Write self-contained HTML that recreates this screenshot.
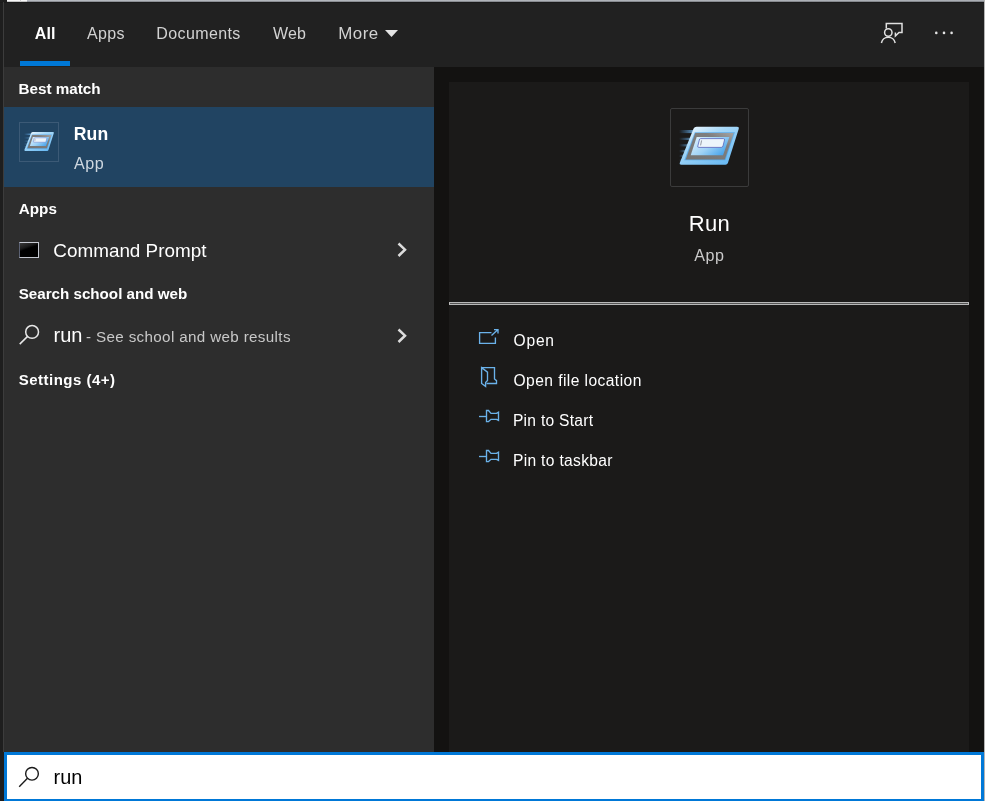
<!DOCTYPE html>
<html><head><meta charset="utf-8"><title>Search</title>
<style>
html,body{margin:0;padding:0}
body{width:985px;height:801px;position:relative;overflow:hidden;background:#1e1e1e;font-family:"Liberation Sans",sans-serif}
div,span,svg{position:absolute;display:block}
.t{white-space:nowrap;line-height:1;font-weight:400}
#tx{left:0;top:0;width:985px;height:801px;will-change:transform}
.b{font-weight:700}
</style></head><body>
<!-- window chrome -->
<div style="left:0;top:0;width:985px;height:1px;background:linear-gradient(90deg,#b6bac0,#aaaeb4)"></div>
<div style="left:0;top:1px;width:985px;height:1px;background:linear-gradient(90deg,#8e9197,#85888d)"></div>
<div style="left:0;top:0;width:7px;height:3px;background:#1e1e1e"></div>
<div style="left:7px;top:0;width:20px;height:1px;background:#f8f8f8"></div>
<div style="left:7px;top:1px;width:20px;height:1px;background:#c4c4c4"></div>
<div style="left:20px;top:0;width:1px;height:2px;background:#ccc"></div>
<div style="left:0;top:2px;width:985px;height:1px;background:#1a1a1a"></div>
<div style="left:3px;top:2px;width:1px;height:750px;background:#3c3c3c"></div>
<div style="left:984px;top:0;width:1px;height:801px;background:#b4b4b4"></div>
<!-- header -->
<div style="left:4px;top:3px;width:980px;height:64px;background:#212121"></div>
<div style="left:20px;top:61px;width:50px;height:5px;background:#0078d7"></div>
<svg style="left:384px;top:29px" width="16" height="10" viewBox="0 0 16 10"><path d="M1 1 H14 L7.5 8 Z" fill="#e4e4e4"/></svg>
<svg style="left:878px;top:20px" width="28" height="26" viewBox="0 0 28 26" fill="none" stroke="#e0e0e0" stroke-width="1.5">
<path d="M8.3 8.6 V3.4 H24 V12.4 H21 L17.4 16 V12.4"/>
<circle cx="10.3" cy="12.5" r="3.7"/>
<path d="M3.4 23 A7 7 0 0 1 17.2 23"/>
</svg>
<svg style="left:930px;top:28px" width="28" height="10" viewBox="0 0 28 10"><circle cx="6.3" cy="4.9" r="1.3" fill="#e4e4e4"/><circle cx="14" cy="4.9" r="1.3" fill="#e4e4e4"/><circle cx="21.6" cy="4.9" r="1.3" fill="#e4e4e4"/></svg>
<!-- left pane -->
<div style="left:4px;top:67px;width:430px;height:685px;background:#2d2d2d"></div>
<div style="left:4px;top:107px;width:430px;height:80px;background:#214462"></div>
<div style="left:19px;top:122px;width:38px;height:38px;border:1px solid #3c5a76"></div>

<svg style="left:23px;top:130.1px" width="32" height="24" viewBox="0 0 64 48">
<defs>
<linearGradient id="g1a" x1="0.1" y1="0" x2="0.9" y2="1"><stop offset="0" stop-color="#f4faff"/><stop offset="0.35" stop-color="#a6d8f8"/><stop offset="1" stop-color="#62b6f2"/></linearGradient>
<linearGradient id="g2a" x1="0" y1="0.2" x2="1" y2="0.8"><stop offset="0" stop-color="#dcf0fd"/><stop offset="0.5" stop-color="#9ed2f6"/><stop offset="1" stop-color="#3f9fea"/></linearGradient>
<linearGradient id="g3a" x1="0" y1="0" x2="1" y2="0"><stop offset="0" stop-color="#4a8fd0" stop-opacity="0"/><stop offset="1" stop-color="#6fb4ea" stop-opacity="0.85"/></linearGradient>
<linearGradient id="g4a" x1="0" y1="1" x2="1" y2="0"><stop offset="0" stop-color="#747474"/><stop offset="0.7" stop-color="#7e7e7e"/><stop offset="1" stop-color="#a4a4a4"/></linearGradient>
</defs>
<rect x="2" y="7" width="15" height="3.1" fill="url(#g3a)"/>
<rect x="2" y="14.8" width="12" height="2.2" fill="url(#g3a)" opacity="0.8"/>
<rect x="2" y="21.2" width="9.5" height="2.2" fill="url(#g3a)" opacity="0.75"/>
<rect x="2" y="26.9" width="7.5" height="2.4" fill="url(#g3a)" opacity="0.7"/>
<rect x="2" y="31.8" width="5.5" height="2.2" fill="url(#g3a)" opacity="0.6"/>
<rect x="2" y="36.4" width="4" height="2" fill="url(#g3a)" opacity="0.5"/>
<path d="M19.6 3.75 L60 3.75 Q62.4 3.75 61.7 6 L50.9 40 Q50.3 41.8 48.4 41.8 L4.4 41.8 Q2 41.8 2.9 39.6 L16.6 5.6 Q17.4 3.75 19.6 3.75 Z" fill="url(#g1a)"/>
<path d="M17.8 9.2 L57.9 9.2 L48.4 37.3 L7.3 37.3 Z" fill="#4e9fe2" opacity="0.75"/>
<path d="M18.3 10.1 L56.7 10.1 L47.8 36.4 L8.7 36.4 Z" fill="url(#g4a)"/>
<path d="M19.7 14.1 L52.4 14.1 L46 32.2 L13.7 32.2 Z" fill="url(#g2a)"/>
<path d="M23.6 15.6 L46.4 15.6 Q47.9 15.6 47.5 17 L46 23 Q45.6 24.4 44.2 24.4 L21.8 24.4 Q20.3 24.4 20.8 23 L22.3 17 Q22.6 15.6 23.6 15.6 Z" fill="#ecf5fb" stroke="#5762ba" stroke-width="0.8"/>
<path d="M24.6 17.4 L23.6 22.4" stroke="#8a8f98" stroke-width="0.9" fill="none"/>
</svg>
<!-- cmd icon -->
<div style="left:19px;top:242px;width:18px;height:14px;border:1px solid #c4c8d0;border-left-color:#5a6072;background:linear-gradient(160deg,#3a3a3a 0%,#1a1a1a 30%,#000 42%)"></div>
<svg style="left:394px;top:240px" width="16" height="20" viewBox="0 0 16 20" fill="none" stroke="#dcdcdc" stroke-width="2.5"><path d="M4.5 3.5 L11 9.7 L4.5 16"/></svg>
<svg style="left:394px;top:326px" width="16" height="20" viewBox="0 0 16 20" fill="none" stroke="#dcdcdc" stroke-width="2.5"><path d="M4.5 3.5 L11 9.7 L4.5 16"/></svg>
<svg style="left:16px;top:322px" width="26" height="26" viewBox="0 0 26 26" fill="none" stroke="#e8e8e8" stroke-width="1.5"><circle cx="16.1" cy="9.9" r="6.4"/><path d="M11.6 14.4 L3.7 22.1"/></svg>
<!-- right pane -->
<div style="left:434px;top:67px;width:550px;height:685px;background:#131211"></div>
<div style="left:449px;top:82px;width:520px;height:670px;background:#1b1a19"></div>
<div style="left:669.5px;top:107.5px;width:77px;height:77px;border:1px solid #3b3b3b;border-radius:2px;box-sizing:content-box"></div>

<svg style="left:677px;top:123px" width="64" height="48" viewBox="0 0 64 48">
<defs>
<linearGradient id="g1b" x1="0.1" y1="0" x2="0.9" y2="1"><stop offset="0" stop-color="#f4faff"/><stop offset="0.35" stop-color="#a6d8f8"/><stop offset="1" stop-color="#62b6f2"/></linearGradient>
<linearGradient id="g2b" x1="0" y1="0.2" x2="1" y2="0.8"><stop offset="0" stop-color="#dcf0fd"/><stop offset="0.5" stop-color="#9ed2f6"/><stop offset="1" stop-color="#3f9fea"/></linearGradient>
<linearGradient id="g3b" x1="0" y1="0" x2="1" y2="0"><stop offset="0" stop-color="#4a8fd0" stop-opacity="0"/><stop offset="1" stop-color="#6fb4ea" stop-opacity="0.85"/></linearGradient>
<linearGradient id="g4b" x1="0" y1="1" x2="1" y2="0"><stop offset="0" stop-color="#747474"/><stop offset="0.7" stop-color="#7e7e7e"/><stop offset="1" stop-color="#a4a4a4"/></linearGradient>
</defs>
<rect x="2" y="7" width="15" height="3.1" fill="url(#g3b)"/>
<rect x="2" y="14.8" width="12" height="2.2" fill="url(#g3b)" opacity="0.8"/>
<rect x="2" y="21.2" width="9.5" height="2.2" fill="url(#g3b)" opacity="0.75"/>
<rect x="2" y="26.9" width="7.5" height="2.4" fill="url(#g3b)" opacity="0.7"/>
<rect x="2" y="31.8" width="5.5" height="2.2" fill="url(#g3b)" opacity="0.6"/>
<rect x="2" y="36.4" width="4" height="2" fill="url(#g3b)" opacity="0.5"/>
<path d="M19.6 3.75 L60 3.75 Q62.4 3.75 61.7 6 L50.9 40 Q50.3 41.8 48.4 41.8 L4.4 41.8 Q2 41.8 2.9 39.6 L16.6 5.6 Q17.4 3.75 19.6 3.75 Z" fill="url(#g1b)"/>
<path d="M17.8 9.2 L57.9 9.2 L48.4 37.3 L7.3 37.3 Z" fill="#4e9fe2" opacity="0.75"/>
<path d="M18.3 10.1 L56.7 10.1 L47.8 36.4 L8.7 36.4 Z" fill="url(#g4b)"/>
<path d="M19.7 14.1 L52.4 14.1 L46 32.2 L13.7 32.2 Z" fill="url(#g2b)"/>
<path d="M23.6 15.6 L46.4 15.6 Q47.9 15.6 47.5 17 L46 23 Q45.6 24.4 44.2 24.4 L21.8 24.4 Q20.3 24.4 20.8 23 L22.3 17 Q22.6 15.6 23.6 15.6 Z" fill="#ecf5fb" stroke="#5762ba" stroke-width="0.8"/>
<path d="M24.6 17.4 L23.6 22.4" stroke="#8a8f98" stroke-width="0.9" fill="none"/>
</svg>
<div style="left:449px;top:302px;width:520px;height:3px;background:#555;box-sizing:border-box;border:1px solid #b8b8b8"></div>
<!-- action icons -->
<svg style="left:475px;top:325px" width="28" height="24" viewBox="0 0 28 24" fill="none" stroke="#6bb2ea" stroke-width="1.35"><path d="M16.5 7.6 H4.6 V18.4 H20.4 V12.5"/><path d="M16.5 10.6 L23 4.6 M19 4.6 H23 V8.6"/></svg>
<svg style="left:475px;top:362px" width="28" height="28" viewBox="0 0 28 28" fill="none" stroke="#6bb2ea" stroke-width="1.35"><path d="M6.6 5.6 H19.5 V17 L21.5 18.6 V21.5 H11.5"/><path d="M6.6 5.6 L12.5 10.2 V18.5 L10.6 20.5 V24.4 L6.6 21.5 Z"/></svg>
<svg style="left:475px;top:404px" width="28" height="24" viewBox="0 0 28 24" fill="none" stroke="#6bb2ea" stroke-width="1.35"><path d="M4 12.5 H11.5"/><path d="M11.5 6.5 H13.5 L16 9.4 H21.5 L23.5 8.2 V16.4 L21.5 15.3 H16 L13.5 17.6 H11.5 Z"/></svg>
<svg style="left:475px;top:444px" width="28" height="24" viewBox="0 0 28 24" fill="none" stroke="#6bb2ea" stroke-width="1.35"><path d="M4 12.5 H11.5"/><path d="M11.5 6.5 H13.5 L16 9.4 H21.5 L23.5 8.2 V16.4 L21.5 15.3 H16 L13.5 17.6 H11.5 Z"/></svg>
<!-- search box -->
<div style="left:4px;top:752px;width:980px;height:49px;background:#0078d7"></div>
<div style="left:7px;top:755px;width:974px;height:44px;background:#fff"></div>
<svg style="left:16px;top:764px" width="26" height="26" viewBox="0 0 26 26" fill="none" stroke="#1a1a1a" stroke-width="1.4"><circle cx="16" cy="9.8" r="6.35"/><path d="M11.5 14.3 L3.2 22.7"/></svg>
<div id="tx">
<span class="t b" style="left:34.70px;top:26.46px;font-size:16px;color:#fff;letter-spacing:0.21px;">All</span>
<span class="t" style="left:86.92px;top:26.46px;font-size:16px;color:#d2d2d2;letter-spacing:0.35px;">Apps</span>
<span class="t" style="left:156.32px;top:26.46px;font-size:16px;color:#d2d2d2;letter-spacing:0.38px;">Documents</span>
<span class="t" style="left:273.12px;top:26.46px;font-size:16px;color:#d2d2d2;letter-spacing:0.03px;">Web</span>
<span class="t" style="left:338.25px;top:25.69px;font-size:16.9px;color:#d2d2d2;letter-spacing:0.46px;">More</span>
<span class="t b" style="left:18.41px;top:80.89px;font-size:15.25px;color:#fff;">Best match</span>
<span class="t b" style="left:73.66px;top:126.20px;font-size:17.6px;color:#fff;letter-spacing:0.23px;">Run</span>
<span class="t" style="left:74.02px;top:155.17px;font-size:16.1px;color:#cfd8e0;letter-spacing:0.48px;">App</span>
<span class="t b" style="left:18.82px;top:200.90px;font-size:15.24px;color:#fff;">Apps</span>
<span class="t" style="left:53.36px;top:241.83px;font-size:18.87px;color:#fff;">Command Prompt</span>
<span class="t b" style="left:18.74px;top:286.06px;font-size:15.17px;color:#fff;">Search school and web</span>
<span class="t" style="left:53.50px;top:324.87px;font-size:20.0px;color:#fff;">run</span>
<span class="t" style="left:86.02px;top:328.93px;font-size:15.2px;color:#c8c8c8;letter-spacing:0.35px;">- See school and web results</span>
<span class="t b" style="left:18.75px;top:372.00px;font-size:15px;color:#fff;letter-spacing:0.48px;">Settings (4+)</span>
<span class="t" style="left:688.69px;top:213.38px;font-size:22px;color:#fff;letter-spacing:0.31px;">Run</span>
<span class="t" style="left:694.27px;top:247.37px;font-size:16.1px;color:#cacaca;letter-spacing:0.48px;">App</span>
<span class="t" style="left:513.50px;top:332.69px;font-size:15.6px;color:#fff;letter-spacing:0.79px;">Open</span>
<span class="t" style="left:513.50px;top:372.69px;font-size:15.6px;color:#fff;letter-spacing:0.43px;">Open file location</span>
<span class="t" style="left:512.95px;top:412.69px;font-size:15.6px;color:#fff;letter-spacing:0.27px;">Pin to Start</span>
<span class="t" style="left:512.95px;top:452.69px;font-size:15.6px;color:#fff;letter-spacing:0.32px;">Pin to taskbar</span>
<span class="t" style="left:53.61px;top:768.14px;font-size:19.92px;color:#000;">run</span>
</div>
</body></html>
